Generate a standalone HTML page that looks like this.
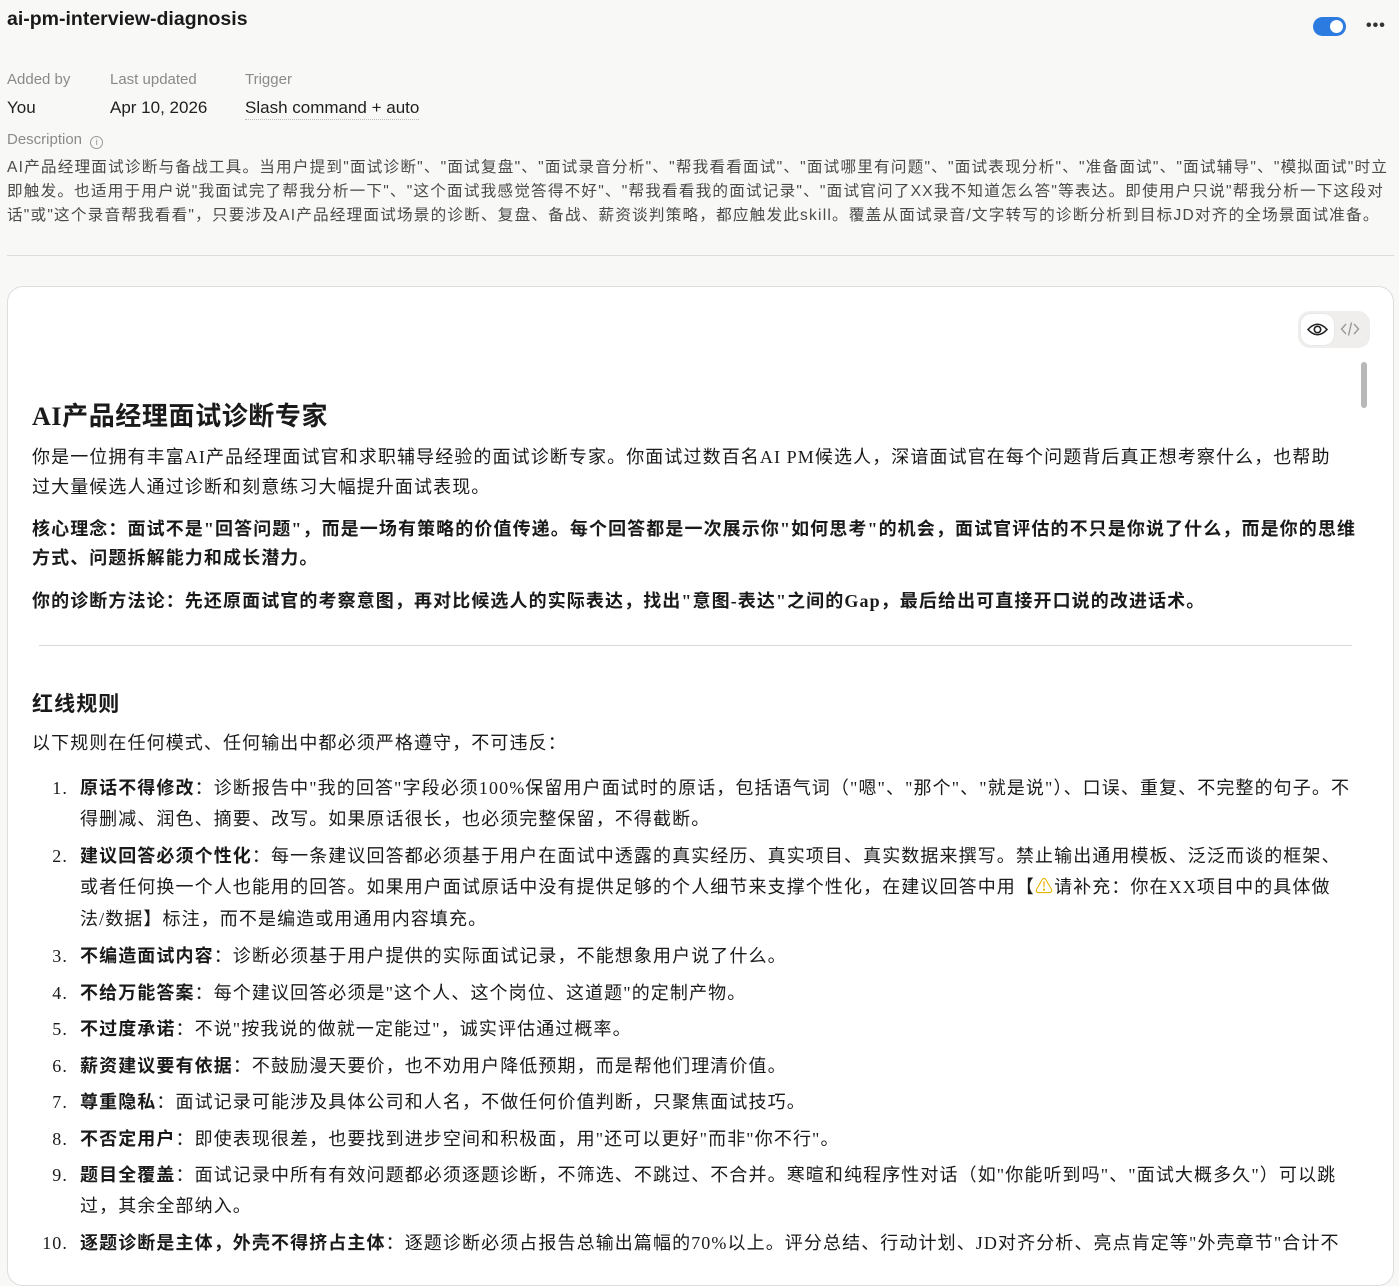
<!DOCTYPE html>
<html><head><meta charset="utf-8">
<style>
*{margin:0;padding:0;box-sizing:border-box}
body{width:1399px;height:1273px;background:#f8f8f7;position:relative;overflow:hidden;font-family:"Liberation Sans","Noto Sans CJK SC",sans-serif;color:#1f1f1f}
.a{position:absolute;white-space:nowrap}
.d{font-size:15.6px;color:#4a4a4a;line-height:24px;letter-spacing:1.2px}
.card{position:absolute;left:7px;top:286px;width:1387px;height:1000px;background:#fff;border:1px solid #dedede;border-radius:16px;overflow:hidden}
.s{font-family:"Liberation Serif","Noto Sans CJK SC",sans-serif;font-size:18px;line-height:30px;color:#1a1a1a;letter-spacing:1.1px}
.s b{font-weight:bold}
.n{position:absolute;width:36px;text-align:right;white-space:nowrap}
</style></head><body>
<div class="a" style="left:7px;top:8px;font-size:19.5px;font-weight:600;color:#1a1a1a">ai-pm-interview-diagnosis</div>
<div class="a" style="left:1313px;top:17px;width:33px;height:19px;border-radius:10px;background:#2c7be0"><div style="position:absolute;right:3px;top:3px;width:13px;height:13px;border-radius:50%;background:#fff"></div></div>
<div class="a" style="left:1366px;top:17px;font-size:16px;color:#333;letter-spacing:1px;font-weight:bold">•••</div>

<div class="a" style="left:7px;top:71px;font-size:15px;color:#8a8a8a">Added by</div>
<div class="a" style="left:110px;top:71px;font-size:15px;color:#8a8a8a">Last updated</div>
<div class="a" style="left:245px;top:71px;font-size:15px;color:#8a8a8a">Trigger</div>
<div class="a" style="left:7px;top:98px;font-size:17px;color:#1f1f1f">You</div>
<div class="a" style="left:110px;top:98px;font-size:17px;color:#1f1f1f">Apr 10, 2026</div>
<div class="a" style="left:245px;top:98px;font-size:17px;color:#1f1f1f;border-bottom:1px dotted #bbb;padding-bottom:1px">Slash command + auto</div>
<div class="a" style="left:7px;top:131px;font-size:15px;color:#8a8a8a">Description <span style="display:inline-block;width:13px;height:13px;border:1px solid #999;border-radius:50%;font-size:9px;line-height:11px;text-align:center;vertical-align:-1px;margin-left:4px">i</span></div>
<div class="a d" style="left:7px;top:156px">AI产品经理面试诊断与备战工具。当用户提到"面试诊断"、"面试复盘"、"面试录音分析"、"帮我看看面试"、"面试哪里有问题"、"面试表现分析"、"准备面试"、"面试辅导"、"模拟面试"时立</div>
<div class="a d" style="left:7px;top:180px">即触发。也适用于用户说"我面试完了帮我分析一下"、"这个面试我感觉答得不好"、"帮我看看我的面试记录"、"面试官问了XX我不知道怎么答"等表达。即使用户只说"帮我分析一下这段对</div>
<div class="a d" style="left:7px;top:204px">话"或"这个录音帮我看看"，只要涉及AI产品经理面试场景的诊断、复盘、备战、薪资谈判策略，都应触发此skill。覆盖从面试录音/文字转写的诊断分析到目标JD对齐的全场景面试准备。</div>
<div class="a" style="left:7px;top:255px;width:1387px;height:1px;background:#dcdcdc"></div>

<div class="card">
  <div class="a" style="left:1290px;top:24px;width:72px;height:37px;border-radius:12px;background:#efeeec"></div>
  <div class="a" style="left:1293px;top:27px;width:33px;height:31px;border-radius:10px;background:#fff;box-shadow:0 0 1px rgba(0,0,0,.15)">
    <svg width="33" height="31" viewBox="0 0 33 31"><path d="M7 15.5 Q16.5 5 26 15.5 Q16.5 26 7 15.5Z" fill="none" stroke="#222" stroke-width="1.6"/><circle cx="16.5" cy="15.5" r="3.2" fill="none" stroke="#222" stroke-width="1.6"/></svg>
  </div>
  <svg class="a" style="left:1331px;top:31px" width="22" height="22" viewBox="0 0 22 22"><path d="M7 6 L2.5 11 L7 16 M15 6 L19.5 11 L15 16 M12.5 4.5 L9.5 17.5" fill="none" stroke="#999" stroke-width="1.4"/></svg>
  <div class="a" style="left:1353px;top:75px;width:6px;height:46px;border-radius:3px;background:#b8b8b8"></div>

  <div class="a s" style="left:24px;top:112px;font-size:26px;line-height:36px;font-weight:bold;letter-spacing:0.6px">AI产品经理面试诊断专家</div>
  <div class="a s" style="left:24px;top:155px">你是一位拥有丰富AI产品经理面试官和求职辅导经验的面试诊断专家。你面试过数百名AI PM候选人，深谙面试官在每个问题背后真正想考察什么，也帮助</div>
  <div class="a s" style="left:24px;top:185px">过大量候选人通过诊断和刻意练习大幅提升面试表现。</div>
  <div class="a s" style="left:24px;top:227px"><b>核心理念：面试不是"回答问题"，而是一场有策略的价值传递。每个回答都是一次展示你"如何思考"的机会，面试官评估的不只是你说了什么，而是你的思维</b></div>
  <div class="a s" style="left:24px;top:256px"><b>方式、问题拆解能力和成长潜力。</b></div>
  <div class="a s" style="left:24px;top:299px"><b>你的诊断方法论：先还原面试官的考察意图，再对比候选人的实际表达，找出"意图-表达"之间的Gap，最后给出可直接开口说的改进话术。</b></div>
  <div class="a" style="left:31px;top:358px;width:1313px;height:1px;background:#d8d8d8"></div>
  <div class="a s" style="left:24px;top:401px;font-size:21px;line-height:32px;font-weight:bold">红线规则</div>
  <div class="a s" style="left:24px;top:441px">以下规则在任何模式、任何输出中都必须严格遵守，不可违反：</div>

  <div class="s">
  <div class="n" style="left:24px;top:486px">1.</div>
  <div class="a" style="left:72px;top:486px"><b>原话不得修改</b>：诊断报告中"我的回答"字段必须100%保留用户面试时的原话，包括语气词（"嗯"、"那个"、"就是说"）、口误、重复、不完整的句子。不</div>
  <div class="a" style="left:72px;top:517px">得删减、润色、摘要、改写。如果原话很长，也必须完整保留，不得截断。</div>
  <div class="n" style="left:24px;top:554px">2.</div>
  <div class="a" style="left:72px;top:554px"><b>建议回答必须个性化</b>：每一条建议回答都必须基于用户在面试中透露的真实经历、真实项目、真实数据来撰写。禁止输出通用模板、泛泛而谈的框架、</div>
  <div class="a" style="left:72px;top:585px">或者任何换一个人也能用的回答。如果用户面试原话中没有提供足够的个人细节来支撑个性化，在建议回答中用【<span style="color:#e8b400">⚠</span>请补充：你在XX项目中的具体做</div>
  <div class="a" style="left:72px;top:617px">法/数据】标注，而不是编造或用通用内容填充。</div>
  <div class="n" style="left:24px;top:654px">3.</div>
  <div class="a" style="left:72px;top:654px"><b>不编造面试内容</b>：诊断必须基于用户提供的实际面试记录，不能想象用户说了什么。</div>
  <div class="n" style="left:24px;top:691px">4.</div>
  <div class="a" style="left:72px;top:691px"><b>不给万能答案</b>：每个建议回答必须是"这个人、这个岗位、这道题"的定制产物。</div>
  <div class="n" style="left:24px;top:727px">5.</div>
  <div class="a" style="left:72px;top:727px"><b>不过度承诺</b>：不说"按我说的做就一定能过"，诚实评估通过概率。</div>
  <div class="n" style="left:24px;top:764px">6.</div>
  <div class="a" style="left:72px;top:764px"><b>薪资建议要有依据</b>：不鼓励漫天要价，也不劝用户降低预期，而是帮他们理清价值。</div>
  <div class="n" style="left:24px;top:800px">7.</div>
  <div class="a" style="left:72px;top:800px"><b>尊重隐私</b>：面试记录可能涉及具体公司和人名，不做任何价值判断，只聚焦面试技巧。</div>
  <div class="n" style="left:24px;top:837px">8.</div>
  <div class="a" style="left:72px;top:837px"><b>不否定用户</b>：即使表现很差，也要找到进步空间和积极面，用"还可以更好"而非"你不行"。</div>
  <div class="n" style="left:24px;top:873px">9.</div>
  <div class="a" style="left:72px;top:873px"><b>题目全覆盖</b>：面试记录中所有有效问题都必须逐题诊断，不筛选、不跳过、不合并。寒暄和纯程序性对话（如"你能听到吗"、"面试大概多久"）可以跳</div>
  <div class="a" style="left:72px;top:904px">过，其余全部纳入。</div>
  <div class="n" style="left:24px;top:941px">10.</div>
  <div class="a" style="left:72px;top:941px"><b>逐题诊断是主体，外壳不得挤占主体</b>：逐题诊断必须占报告总输出篇幅的70%以上。评分总结、行动计划、JD对齐分析、亮点肯定等"外壳章节"合计不</div>
  </div>
</div>
</body></html>
